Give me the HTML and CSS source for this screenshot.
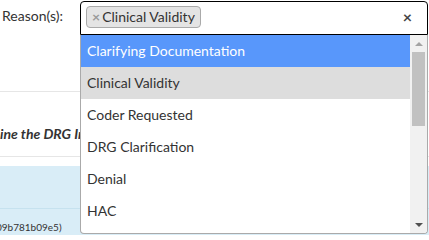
FILE: index.html
```html
<!DOCTYPE html>
<html lang="en">
<head>
<meta charset="utf-8">
<title>Reason select</title>
<link rel="stylesheet" href="styles.css">
</head>
<body>
<div class="page">
  <div class="form-row">
    <label class="label">Reason(s):</label>
    <div class="select">
      <div class="selection">
        <span class="tag"><span class="tag-x">×</span>Clinical Validity</span>
        <span class="clear">×</span>
      </div>
      <div class="dropdown">
        <ul class="results">
          <li class="opt highlighted">Clarifying Documentation</li>
          <li class="opt selected">Clinical Validity</li>
          <li class="opt">Coder Requested</li>
          <li class="opt">DRG Clarification</li>
          <li class="opt">Denial</li>
          <li class="opt">HAC</li>
        </ul>
        <div class="scrollbar">
          <div class="sb-btn">
            <svg width="8" height="4" viewBox="0 0 8 4"><polygon points="0,4 8,4 4,0" fill="#a3a3a3"/></svg>
          </div>
          <div class="sb-thumb"></div>
          <div class="sb-track"></div>
          <div class="sb-btn">
            <svg width="8" height="4" viewBox="0 0 8 4"><polygon points="0,0 8,0 4,4" fill="#505050"/></svg>
          </div>
        </div>
      </div>
    </div>
  </div>
  <div class="rule"></div>
  <div class="text-row"><strong><em>ine the DRG Impact</em></strong></div>
  <div class="rule"></div>
  <div class="info">
    <div class="info-top"></div>
    <div class="info-line"></div>
    <div class="info-text"><span class="clip">09b781b09e5)</span></div>
  </div>
</div>
</body>
</html>
```

FILE: styles.css
```css
html, body {
  margin: 0;
  padding: 0;
  overflow: hidden;
  background: #fff;
}

body {
  font-family: Lato, "Open Sans", sans-serif;
  color: #333;
}

.page {
  width: 429px;
}

.form-row {
  display: flex;
  align-items: flex-start;
  height: 91px;
  padding-top: 1px;
  box-sizing: border-box;
}

.label {
  flex: 0 0 80px;
  box-sizing: border-box;
  padding-left: 2px;
  padding-top: 5px;
  font-size: 14px;
  line-height: 20px;
  color: #333;
}

.select {
  position: relative;
  width: 348px;
}

.selection {
  display: flex;
  align-items: flex-start;
  height: 34px;
  box-sizing: border-box;
  border: 1px solid #000;
  border-radius: 4px 4px 0 0;
  padding: 4px 5px 0 5px;
  background: #fff;
}

.tag {
  height: 22px;
  box-sizing: border-box;
  border: 1px solid #aaa;
  border-radius: 4px;
  background: #e4e4e4;
  padding: 0 5px;
  font-size: 14px;
  line-height: 20px;
  color: #333;
  white-space: nowrap;
}

.tag-x {
  color: #999;
  font-weight: bold;
  margin-right: 2px;
}

.clear {
  margin-left: auto;
  margin-right: 10px;
  font-size: 16px;
  font-weight: bold;
  line-height: 22px;
  color: #444;
}

.dropdown {
  position: absolute;
  top: 100%;
  left: 0;
  width: 348px;
  height: 199px;
  box-sizing: border-box;
  border: 1px solid #aaa;
  border-top: none;
  border-radius: 0 0 4px 4px;
  background: #fff;
  display: flex;
  overflow: hidden;
}

.results {
  flex: 1;
  list-style: none;
  margin: 0;
  padding: 0;
  overflow: hidden;
}

.opt {
  padding: 6px;
  font-size: 14px;
  line-height: 20px;
  color: #333;
  white-space: nowrap;
}

.opt.highlighted {
  background: #5897fb;
  color: #fff;
}

.opt.selected {
  background: #ddd;
}

.scrollbar {
  flex: 0 0 17px;
  display: flex;
  flex-direction: column;
  background: #f1f1f1;
}

.sb-btn {
  height: 17px;
  display: flex;
  align-items: center;
  justify-content: center;
}

.sb-thumb {
  height: 74px;
  margin: 0 2px;
  background: #c1c1c1;
}

.sb-track {
  flex: 1;
}

.rule {
  height: 1px;
  background: #e6e6e6;
}

.text-row {
  padding: 32px 0 12px 0;
  font-size: 14px;
  line-height: 20px;
  color: #333;
  white-space: nowrap;
  overflow: hidden;
}

.info {
  margin-top: 9px;
  background: #d9edf7;
}

.info-top {
  height: 42px;
}

.info-line {
  height: 1px;
  background: #c6e2ef;
}

.info-text {
  padding-top: 10px;
  font-size: 10px;
  line-height: 16px;
  color: #333;
  white-space: nowrap;
  overflow: hidden;
}

.clip {
  display: inline-block;
  margin-left: -4px;
}
```
